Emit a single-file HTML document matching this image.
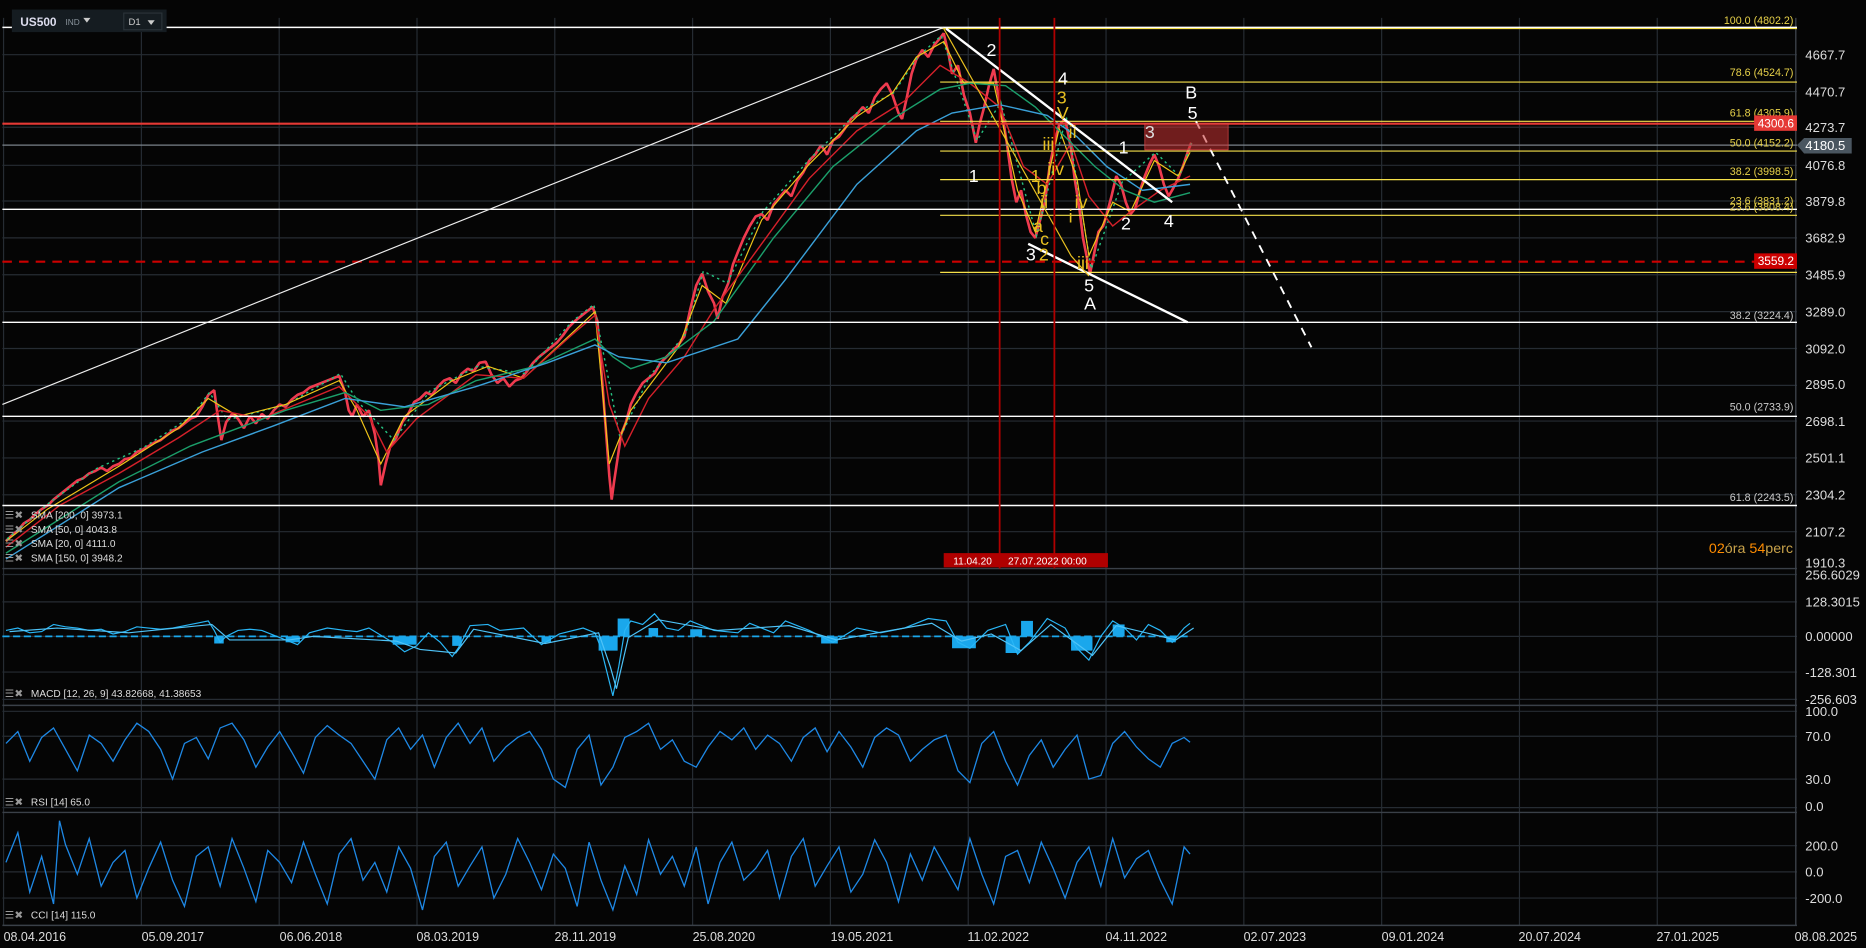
<!DOCTYPE html>
<html><head><meta charset="utf-8"><style>
html,body{margin:0;padding:0;background:#050505;overflow:hidden}
svg{display:block}
text{font-family:"Liberation Sans",sans-serif}
</style></head><body>
<svg width="1866" height="948" viewBox="0 0 1568 797" preserveAspectRatio="none" xmlns="http://www.w3.org/2000/svg">
<rect width="1568" height="797" fill="#050505"/>
<g stroke="#262c33" stroke-width="1">
<line x1="3" y1="15" x2="3" y2="778"/><line x1="118.8" y1="15" x2="118.8" y2="778"/><line x1="234.6" y1="15" x2="234.6" y2="778"/><line x1="350.4" y1="15" x2="350.4" y2="778"/><line x1="466.2" y1="15" x2="466.2" y2="778"/><line x1="582" y1="15" x2="582" y2="778"/><line x1="697.8" y1="15" x2="697.8" y2="778"/><line x1="813.6" y1="15" x2="813.6" y2="778"/><line x1="929.4" y1="15" x2="929.4" y2="778"/><line x1="1045.2" y1="15" x2="1045.2" y2="778"/><line x1="1161" y1="15" x2="1161" y2="778"/><line x1="1276.8" y1="15" x2="1276.8" y2="778"/><line x1="1392.6" y1="15" x2="1392.6" y2="778"/>
<line x1="2" y1="46" x2="1510" y2="46"/><line x1="2" y1="77" x2="1510" y2="77"/><line x1="2" y1="107" x2="1510" y2="107"/><line x1="2" y1="139" x2="1510" y2="139"/><line x1="2" y1="169" x2="1510" y2="169"/><line x1="2" y1="200" x2="1510" y2="200"/><line x1="2" y1="231" x2="1510" y2="231"/><line x1="2" y1="262" x2="1510" y2="262"/><line x1="2" y1="293" x2="1510" y2="293"/><line x1="2" y1="324" x2="1510" y2="324"/><line x1="2" y1="354" x2="1510" y2="354"/><line x1="2" y1="385" x2="1510" y2="385"/><line x1="2" y1="416" x2="1510" y2="416"/><line x1="2" y1="447" x2="1510" y2="447"/>
<line x1="2" y1="483" x2="1510" y2="483"/><line x1="2" y1="506" x2="1510" y2="506"/><line x1="2" y1="535" x2="1510" y2="535"/><line x1="2" y1="565" x2="1510" y2="565"/><line x1="2" y1="588" x2="1510" y2="588"/>
<line x1="2" y1="598" x2="1510" y2="598"/><line x1="2" y1="619" x2="1510" y2="619"/><line x1="2" y1="655" x2="1510" y2="655"/><line x1="2" y1="679" x2="1510" y2="679"/>
<line x1="2" y1="711" x2="1510" y2="711"/><line x1="2" y1="733" x2="1510" y2="733"/><line x1="2" y1="755" x2="1510" y2="755"/>
</g>
<g stroke="#3a4048" stroke-width="1.2">
<line x1="2" y1="478" x2="1510" y2="478"/><line x1="2" y1="593" x2="1510" y2="593"/><line x1="2" y1="683" x2="1510" y2="683"/><line x1="2" y1="778" x2="1510" y2="778"/>
<line x1="1509" y1="15" x2="1509" y2="778"/>
</g>
<!-- price -->
<polyline fill="none" stroke="#ef3b4f" stroke-width="2.2" stroke-linejoin="bevel" points="5,455 10,450 15,446 20,440 25,437 30,432 35,428 40,425 45,420 50,416 55,412 60,408 65,404 70,402 75,398 80,396 85,393 90,396 95,392 100,390 105,386 110,385 115,380 120,378 125,375 130,372 135,370 140,366 145,362 150,360 155,356 160,352 165,350 170,342 175,332 180,328 183,350 186,370 190,355 195,348 200,352 205,360 210,350 215,356 220,348 225,352 230,345 235,340 240,342 245,336 250,332 255,330 260,326 265,324 270,322 275,320 280,318 285,316 290,330 293,345 296,350 300,340 305,350 310,345 315,365 318,385 320,408 324,390 328,375 333,368 338,355 343,348 348,338 353,335 358,330 363,332 368,325 373,320 378,318 383,322 388,314 393,310 398,312 403,305 408,304 413,315 418,322 423,318 428,325 433,320 438,318 443,312 448,305 453,300 458,296 463,292 468,288 473,282 478,275 483,270 488,266 493,262 498,258 502,270 506,320 509,360 512,400 514,420 516,405 519,385 522,365 526,355 530,340 535,330 540,322 545,318 550,314 555,305 560,300 565,295 570,290 575,283 580,260 585,240 590,230 595,245 600,255 603,268 607,250 612,238 616,222 620,212 625,200 630,190 635,182 640,180 645,185 650,172 655,166 660,160 665,165 670,152 675,145 680,135 685,130 690,122 695,130 700,118 705,115 710,108 715,100 720,96 725,90 730,95 735,82 740,75 745,70 750,80 755,95 758,100 762,82 766,62 770,50 775,42 780,48 785,38 790,32 793,28 797,45 800,62 805,55 810,80 815,95 820,120 823,105 827,90 831,72 835,58 838,75 842,95 846,120 850,150 854,170 858,160 862,180 866,195 870,200 874,185 878,170 882,140 886,120 890,105 895,100 900,125 903,150 907,175 910,200 913,215 916,230 919,215 923,195 927,190 930,180 934,165 938,148 942,155 946,170 950,180 954,175 958,160 962,148 966,138 970,130 974,140 978,155 982,165 986,158 990,150 994,140 998,128 1001,120"/>
<polyline fill="none" stroke="#26c281" stroke-width="1.2" stroke-dasharray="2,3" transform="translate(1,-2)" points="5,455 40,425 80,396 120,378 160,352 175,332 190,355 240,342 285,316 300,340 330,372 360,331 400,310 440,316 480,272 498,258 520,370 545,318 575,283 590,230 610,240 640,180 680,135 720,96 750,80 770,50 790,32 820,120 840,88 870,200 895,100 916,228 942,155 970,130 990,150 1001,120"/>
<polyline fill="none" stroke="#f0c419" stroke-width="1" points="5,455 40,428 100,392 150,360 175,335 200,350 240,340 285,320 300,345 320,390 340,350 380,320 410,308 440,318 470,290 500,262 512,390 530,345 570,292 590,240 610,255 640,185 680,138 720,98 750,78 770,48 793,35 810,70 835,70 855,160 870,195 890,108 905,150 915,215 935,170 950,178 970,135 990,148 1000,128"/>
<polyline fill="none" stroke="#d4202a" stroke-width="1.2" points="5,460 50,425 100,398 150,368 185,345 220,352 285,325 310,350 325,380 350,352 400,315 440,318 480,282 500,265 512,340 525,375 545,335 575,300 600,260 640,205 680,150 720,110 760,85 790,55 815,70 840,90 860,140 880,155 900,120 915,165 935,190 950,178 975,160 1000,148"/>
<polyline fill="none" stroke="#1b9e6a" stroke-width="1.2" points="5,465 100,405 160,375 200,360 240,345 290,330 320,345 360,340 400,320 450,308 500,285 515,300 530,310 560,300 600,270 650,200 700,140 750,100 790,75 815,70 845,72 870,90 895,115 920,140 945,160 970,170 1000,162"/>
<polyline fill="none" stroke="#3aa0d8" stroke-width="1.2" points="5,470 100,410 170,380 230,358 290,335 340,342 400,325 460,305 500,290 520,300 560,305 620,285 660,235 720,155 770,110 800,95 840,88 880,97 905,115 930,140 960,160 1000,155"/>
<!-- MACD -->
<g fill="#1aa7ec">
<rect x="180" y="535" width="8" height="6"/><rect x="240" y="535" width="12" height="5"/><rect x="330" y="535" width="20" height="7"/><rect x="380" y="535" width="8" height="8"/><rect x="455" y="535" width="8" height="5"/>
<rect x="503" y="535" width="16" height="12"/><rect x="519" y="520" width="10" height="15"/><rect x="545" y="528" width="8" height="7"/><rect x="580" y="529" width="10" height="6"/>
<rect x="690" y="535" width="14" height="6"/><rect x="800" y="535" width="20" height="10"/><rect x="845" y="535" width="12" height="14"/><rect x="858" y="522" width="10" height="13"/><rect x="900" y="535" width="18" height="12"/><rect x="935" y="525" width="10" height="10"/><rect x="980" y="535" width="8" height="5"/>
</g>
<line x1="2" y1="535" x2="1000" y2="535" stroke="#1aa7ec" stroke-width="1.5" stroke-dasharray="6,3"/>
<polyline fill="none" stroke="#29b6f6" stroke-width="1" points="5,530 15,528 25,532 35,531 45,525 55,527 65,528 75,530 85,529 95,533 105,531 115,527 125,528 135,529 145,528 155,526 165,524 175,522 180,530 185,540 190,535 200,530 210,529 220,530 240,538 250,542 260,532 275,528 290,530 300,531 310,528 330,540 340,548 350,543 360,532 370,540 380,552 385,545 395,526 410,525 420,530 440,528 455,542 470,533 490,528 500,532 505,545 510,565 515,585 520,560 525,530 530,522 540,525 550,516 560,528 570,530 580,522 600,530 620,532 630,524 650,532 660,522 680,530 700,540 720,528 740,532 760,528 780,520 795,522 805,540 815,545 830,530 845,525 855,550 865,540 880,520 895,528 905,545 915,555 925,535 935,522 945,528 955,538 965,525 975,530 985,540 995,528 1000,524"/>
<polyline fill="none" stroke="#4fc3f7" stroke-width="1" transform="translate(3,1)" points="5,530 45,527 105,531 175,524 190,537 240,537 260,534 330,538 350,545 380,548 395,528 455,540 500,531 510,560 515,578 525,535 550,520 600,529 660,525 700,537 780,523 805,538 830,532 855,546 880,524 915,550 935,525 985,537 1000,527"/>
<!-- RSI -->
<polyline fill="none" stroke="#1e88e5" stroke-width="1.1" points="5,625 15,615 25,640 35,620 45,612 55,630 65,648 75,618 85,625 95,640 105,622 115,608 125,615 135,630 145,655 155,625 165,620 175,638 185,612 195,608 205,622 215,645 225,628 235,615 245,632 255,650 265,620 275,610 285,618 295,625 305,640 315,655 325,622 335,612 345,630 355,618 365,645 375,620 385,608 395,625 405,612 415,640 425,628 435,620 445,615 455,630 465,655 475,662 485,630 495,618 505,660 515,645 525,620 535,615 545,608 555,630 565,622 575,640 585,645 595,628 605,615 615,622 625,612 635,630 645,618 655,625 665,640 675,620 685,612 695,632 705,615 715,628 725,645 735,620 745,612 755,618 765,640 775,630 785,622 795,618 805,648 815,658 825,625 835,615 845,640 855,660 865,635 875,622 885,645 895,630 905,618 915,655 925,652 935,625 945,615 955,628 965,638 975,645 985,625 995,620 1000,624"/>
<!-- CCI -->
<polyline fill="none" stroke="#1e88e5" stroke-width="1.1" points="5,725 15,700 25,750 35,720 45,760 50,690 55,710 65,735 75,705 85,745 95,725 105,715 115,755 125,730 135,708 145,740 155,762 165,720 175,712 185,745 195,705 205,730 215,758 225,715 235,725 245,742 255,708 265,735 275,760 285,718 295,705 305,740 315,725 325,750 335,712 345,730 355,765 365,720 375,708 385,745 395,728 405,712 415,755 425,735 435,705 445,725 455,748 465,718 475,730 485,762 495,708 505,740 515,765 525,728 535,752 545,706 555,735 565,720 575,745 585,712 595,760 605,725 615,708 625,740 635,730 645,715 655,755 665,720 675,705 685,745 695,728 705,712 715,750 725,735 735,706 745,725 755,758 765,718 775,740 785,712 795,730 805,748 815,705 825,735 835,760 845,720 855,715 865,742 875,708 885,730 895,755 905,725 915,712 925,745 935,705 945,738 955,722 965,715 975,740 985,760 995,712 1000,718"/>
<!-- horizontal annotation lines -->
<line x1="2" y1="23" x2="1510" y2="23" stroke="#fff" stroke-width="1.2"/>
<line x1="2" y1="104" x2="1510" y2="104" stroke="#e53935" stroke-width="1.8"/>
<line x1="2" y1="122" x2="1510" y2="122" stroke="#7a828a" stroke-width="1"/>
<line x1="2" y1="176" x2="1510" y2="176" stroke="#fff" stroke-width="1.2"/>
<line x1="2" y1="220" x2="1510" y2="220" stroke="#c00" stroke-width="1.8" stroke-dasharray="8,6"/>
<line x1="2" y1="271" x2="1510" y2="271" stroke="#fff" stroke-width="1.2"/>
<line x1="2" y1="350" x2="1510" y2="350" stroke="#fff" stroke-width="1.2"/>
<line x1="2" y1="425" x2="1510" y2="425" stroke="#fff" stroke-width="1.2"/>
<g stroke="#f5e04a" stroke-width="1">
<line x1="790" y1="24" x2="1510" y2="24"/><line x1="790" y1="69" x2="1510" y2="69"/><line x1="790" y1="102" x2="1510" y2="102"/>
<line x1="790" y1="127" x2="1510" y2="127"/><line x1="790" y1="151" x2="1510" y2="151"/><line x1="790" y1="181" x2="1510" y2="181"/><line x1="790" y1="229" x2="1510" y2="229"/>
</g>
<g fill="#e8d24a" font-size="9" text-anchor="end">
<text x="1507" y="20">100.0 (4802.2)</text><text x="1507" y="64">78.6 (4524.7)</text><text x="1507" y="98">61.8 (4305.9)</text>
<text x="1507" y="123">50.0 (4152.2)</text><text x="1507" y="147">38.2 (3998.5)</text><text x="1507" y="172">23.6 (3831.2)</text><text x="1507" y="177">23.6 (3808.4)</text>
<text x="1507" y="224">0.0 (</text>
</g>
<g fill="#ccc" font-size="9" text-anchor="end"><text x="1507" y="268">38.2 (3224.4)</text><text x="1507" y="345">50.0 (2733.9)</text><text x="1507" y="421">61.8 (2243.5)</text></g>
<!-- trend lines -->
<line x1="2" y1="340" x2="793" y2="23" stroke="#eee" stroke-width="1"/>
<line x1="795" y1="24" x2="985" y2="170" stroke="#fff" stroke-width="2"/>
<line x1="864" y1="205" x2="998" y2="271" stroke="#fff" stroke-width="2"/>
<line x1="1005" y1="102" x2="1102" y2="292" stroke="#fff" stroke-width="1.6" stroke-dasharray="7,6"/>
<polyline points="793,24 900,215 915,232" fill="none" stroke="#e8c020" stroke-width="1"/>
<rect x="962" y="104" width="70" height="22" fill="rgba(200,50,50,0.55)" stroke="#d44" stroke-width="0.6"/>
<line x1="840" y1="15" x2="840" y2="478" stroke="#b00000" stroke-width="1.5"/>
<line x1="886" y1="15" x2="886" y2="478" stroke="#b00000" stroke-width="1.5"/>
<rect x="793" y="465" width="138" height="12" fill="#b00000"/>
<text x="801" y="474.5" fill="#fff" font-size="8.5">11.04.20</text><text x="847" y="474.5" fill="#fff" font-size="8.5">27.07.2022 00:00</text>
<!-- wave labels -->
<g fill="#fff" font-size="15">
<text x="829" y="47">2</text><text x="889" y="71">4</text><text x="996" y="83">B</text><text x="998" y="100">5</text>
<text x="814" y="153">1</text><text x="940" y="129">1</text><text x="942" y="193">2</text><text x="978" y="191">4</text>
<text x="862" y="219">3</text><text x="911" y="245">5</text><text x="911" y="260">A</text><text x="962" y="116" fill="#ddd">3</text>
</g>
<g fill="#e8c020" font-size="15">
<text x="888" y="87">3</text><text x="888" y="100">V</text><text x="898" y="116">ii</text><text x="876" y="126">iii</text>
<text x="880" y="147">iiv</text><text x="866" y="153">1</text><text x="871" y="163">b</text><text x="874" y="175">ii</text>
<text x="868" y="195">a</text><text x="874" y="206">c</text><text x="873" y="219">2</text><text x="903" y="175">iv</text><text x="898" y="187">i</text><text x="905" y="226">iii</text>
</g>
<!-- header -->
<rect x="10" y="8" width="130" height="19" fill="#151c21"/>
<text x="17" y="22" fill="#dde" font-size="10" font-weight="bold">US500</text>
<text x="55" y="21" fill="#8a949c" font-size="7">IND</text><path d="M70 15l6 0l-3 4z" fill="#ccc"/>
<rect x="104" y="11" width="32" height="14" fill="#151c21" stroke="#2a3238"/>
<text x="108" y="21" fill="#ccc" font-size="8">D1</text><path d="M124 17l6 0l-3 4z" fill="#ccc"/>
<!-- axis labels -->
<g fill="#ddd" font-size="11">
<text x="1517" y="50">4667.7</text><text x="1517" y="81">4470.7</text><text x="1517" y="111">4273.7</text><text x="1517" y="143">4076.8</text>
<text x="1517" y="173">3879.8</text><text x="1517" y="204">3682.9</text><text x="1517" y="235">3485.9</text><text x="1517" y="266">3289.0</text>
<text x="1517" y="297">3092.0</text><text x="1517" y="327">2895.0</text><text x="1517" y="358">2698.1</text><text x="1517" y="389">2501.1</text>
<text x="1517" y="420">2304.2</text><text x="1517" y="451">2107.2</text><text x="1517" y="477">1910.3</text>
<text x="1517" y="487">256.6029</text><text x="1517" y="510">128.3015</text><text x="1517" y="539">0.00000</text><text x="1517" y="569">-128.301</text><text x="1517" y="592">-256.603</text>
<text x="1517" y="602">100.0</text><text x="1517" y="623">70.0</text><text x="1517" y="659">30.0</text><text x="1517" y="682">0.0</text>
<text x="1517" y="715">200.0</text><text x="1517" y="737">0.0</text><text x="1517" y="759">-200.0</text>
</g>
<rect x="1474" y="97" width="36" height="13" fill="#e53935"/><text x="1477" y="107" fill="#fff" font-size="10">4300.6</text>
<rect x="1474" y="213" width="36" height="13" fill="#c00"/><text x="1477" y="223" fill="#fff" font-size="10">3559.2</text>
<path d="M1510 122l6 -6h40v13h-40z" fill="#4a5660"/><text x="1517" y="126" fill="#fff" font-size="11">4180.5</text>
<text x="1436" y="465" font-size="12" fill="#ff8c00">02<tspan fill="#c8a24a">óra </tspan><tspan fill="#ff8c00">54</tspan><tspan fill="#c8a24a">perc</tspan></text>
<!-- legends -->
<g font-size="8.5" fill="#ddd">
<text x="26" y="436">SMA [200,  0] 3973.1</text><text x="26" y="448">SMA [50,  0] 4043.8</text><text x="26" y="460">SMA [20,  0] 4111.0</text><text x="26" y="472">SMA [150,  0] 3948.2</text>
<text x="26" y="586">MACD [12,  26,  9] 43.82668,   41.38653</text><text x="26" y="677">RSI [14] 65.0</text><text x="26" y="772">CCI [14] 115.0</text>
</g>
<g fill="#999" font-size="9"><text x="4" y="436">☰✖</text><text x="4" y="448">☰✖</text><text x="4" y="460">☰✖</text><text x="4" y="472">☰✖</text><text x="4" y="586">☰✖</text><text x="4" y="677">☰✖</text><text x="4" y="772">☰✖</text></g>
<g fill="#ddd" font-size="10.5">
<text x="3" y="791">08.04.2016</text><text x="119" y="791">05.09.2017</text><text x="235" y="791">06.06.2018</text><text x="350" y="791">08.03.2019</text>
<text x="466" y="791">28.11.2019</text><text x="582" y="791">25.08.2020</text><text x="698" y="791">19.05.2021</text><text x="813" y="791">11.02.2022</text>
<text x="929" y="791">04.11.2022</text><text x="1045" y="791">02.07.2023</text><text x="1161" y="791">09.01.2024</text><text x="1276" y="791">20.07.2024</text>
<text x="1392" y="791">27.01.2025</text><text x="1508" y="791">08.08.2025</text>
</g>
</svg>
</body></html>
